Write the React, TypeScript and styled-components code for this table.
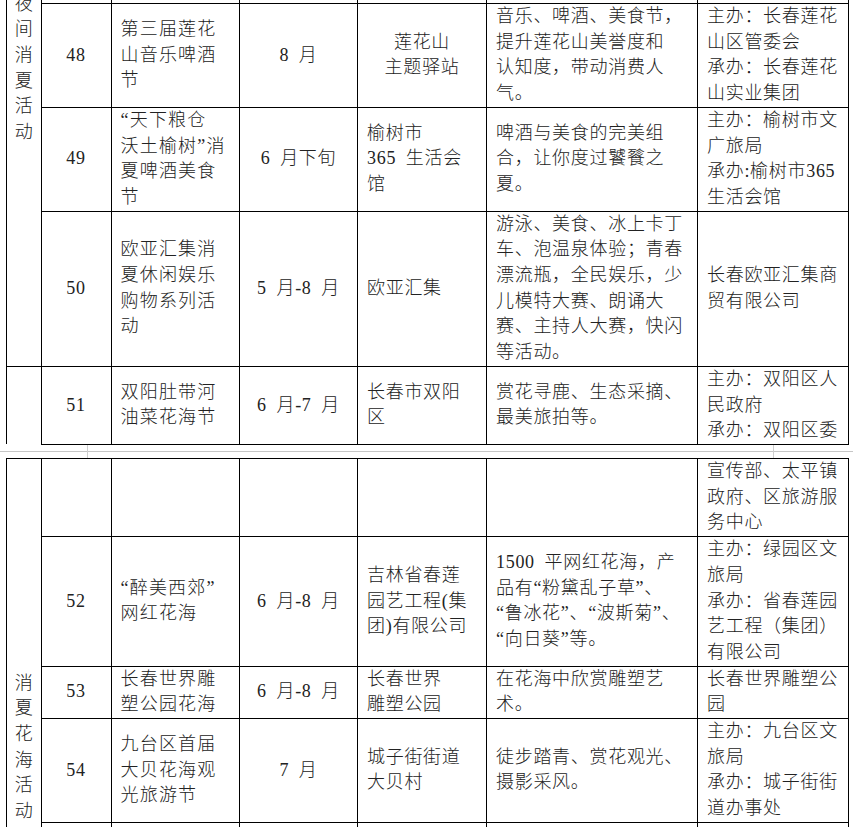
import React from "react";
import styled, { createGlobalStyle } from "styled-components";

const GlobalStyle = createGlobalStyle`
  html, body { margin: 0; padding: 0; background: #ffffff; }
  body {
    font-family: "Liberation Serif", "Noto Sans CJK SC", serif;
    color: #222222;
  }
`;

const Screen = styled.div`
  width: 853px;
  height: 827px;
  overflow: hidden;
  background: #ffffff;
`;

const PageClip = styled.div<{ $h: number }>`
  height: ${(p) => p.$h}px;
  overflow: hidden;
`;

const Sheet = styled.table<{ $offset: number }>`
  border-collapse: collapse;
  table-layout: fixed;
  width: 842px;
  margin: ${(p) => p.$offset}px 0 0 6px;
  font-family: "Liberation Serif", "Noto Sans CJK SC", serif;
  font-size: 18px;
  font-weight: 300;
  line-height: 25.7px;
  color: #222222;
`;

const Cell = styled.td<{ $align?: "left" | "center"; $open?: boolean }>`
  border: 1px solid #000;
  padding: 0 9px;
  vertical-align: middle;
  text-align: ${(p) => p.$align ?? "left"};
  overflow: visible;
  ${(p) => (p.$open ? "border-bottom: none;" : "")}
`;

const GroupCell = styled.td<{ $top: number; $open?: boolean }>`
  border: 1px solid #000;
  ${(p) => (p.$open ? "border-bottom: none;" : "")}
  padding: ${(p) => p.$top}px 0 0 0;
  vertical-align: top;
  text-align: center;
`;

const SpacerCell = styled.td<{ $h: number }>`
  border: 1px solid #000;
  height: ${(p) => p.$h}px;
  padding: 0;
`;

const Line = styled.div<{ $ls?: number }>`
  white-space: nowrap;
  letter-spacing: ${(p) => p.$ls ?? 0.7}px;
  word-spacing: 4.5px;
`;

const Separator = styled.div`
  height: 13px;
  display: flex;
  align-items: stretch;
  background: linear-gradient(
    to bottom,
    transparent 0,
    transparent 6px,
    #c6c6c6 6px,
    #c6c6c6 7px,
    transparent 7px
  );
`;

const Tick = styled.div<{ $left: number }>`
  width: 1px;
  margin-left: ${(p) => p.$left}px;
  background: #cfcfcf;
`;

type RowData = {
  no: string;
  name: string[];
  time: string;
  place: string[];
  placeCenter?: boolean;
  content: string[];
  org: string[];
};

const COLS = [34.5, 70, 128.5, 118, 129, 211, 151];

const Cols = () => (
  <colgroup>
    {COLS.map((w, i) => (
      <col key={i} style={{ width: w }} />
    ))}
  </colgroup>
);

const Lines = ({ lines, ls }: { lines: string[]; ls?: number }) => (
  <>
    {lines.map((l, i) => (
      <Line key={i} $ls={ls}>
        {l}
      </Line>
    ))}
  </>
);

const DataCells = ({ r }: { r: RowData }) => (
  <>
    <Cell $align="center">
      <Line>{r.no}</Line>
    </Cell>
    <Cell>
      <Lines lines={r.name} ls={1.2} />
    </Cell>
    <Cell $align="center">
      <Line>{r.time}</Line>
    </Cell>
    <Cell $align={r.placeCenter ? "center" : "left"}>
      <Lines lines={r.place} />
    </Cell>
    <Cell>
      <Lines lines={r.content} />
    </Cell>
    <Cell>
      <Lines lines={r.org} />
    </Cell>
  </>
);

const page1Rows: RowData[] = [
  {
    no: "48",
    name: ["第三届莲花", "山音乐啤酒", "节"],
    time: "8 月",
    place: ["莲花山", "主题驿站"],
    placeCenter: true,
    content: ["音乐、啤酒、美食节，", "提升莲花山美誉度和", "认知度，带动消费人", "气。"],
    org: ["主办：长春莲花", "山区管委会", "承办：长春莲花", "山实业集团"],
  },
  {
    no: "49",
    name: ["“天下粮仓", "沃土榆树”消", "夏啤酒美食", "节"],
    time: "6 月下旬",
    place: ["榆树市", "365 生活会", "馆"],
    content: ["啤酒与美食的完美组", "合，让你度过饕餮之", "夏。"],
    org: ["主办：榆树市文", "广旅局", "承办:榆树市365", "生活会馆"],
  },
  {
    no: "50",
    name: ["欧亚汇集消", "夏休闲娱乐", "购物系列活", "动"],
    time: "5 月-8 月",
    place: ["欧亚汇集"],
    content: [
      "游泳、美食、冰上卡丁",
      "车、泡温泉体验；青春",
      "漂流瓶，全民娱乐，少",
      "儿模特大赛、朗诵大",
      "赛、主持人大赛，快闪",
      "等活动。",
    ],
    org: ["长春欧亚汇集商", "贸有限公司"],
  },
];

const row51: RowData = {
  no: "51",
  name: ["双阳肚带河", "油菜花海节"],
  time: "6 月-7 月",
  place: ["长春市双阳", "区"],
  content: ["赏花寻鹿、生态采摘、", "最美旅拍等。"],
  org: ["主办：双阳区人", "民政府", "承办：双阳区委"],
};

const page2Rows: RowData[] = [
  {
    no: "52",
    name: ["“醉美西郊”", "网红花海"],
    time: "6 月-8 月",
    place: ["吉林省春莲", "园艺工程(集", "团)有限公司"],
    content: ["1500 平网红花海，产", "品有“粉黛乱子草”、", "“鲁冰花”、“波斯菊”、", "“向日葵”等。"],
    org: ["主办：绿园区文", "旅局", "承办：省春莲园", "艺工程（集团）", "有限公司"],
  },
  {
    no: "53",
    name: ["长春世界雕", "塑公园花海"],
    time: "6 月-8 月",
    place: ["长春世界", "雕塑公园"],
    content: ["在花海中欣赏雕塑艺", "术。"],
    org: ["长春世界雕塑公", "园"],
  },
  {
    no: "54",
    name: ["九台区首届", "大贝花海观", "光旅游节"],
    time: "7 月",
    place: ["城子街街道", "大贝村"],
    content: ["徒步踏青、赏花观光、", "摄影采风。"],
    org: ["主办：九台区文", "旅局", "承办：城子街街", "道办事处"],
  },
];

const VerticalLabel = ({ text }: { text: string }) => (
  <>
    {Array.from(text).map((c, i) => (
      <Line key={i} $ls={0}>
        {c}
      </Line>
    ))}
  </>
);

export default function App() {
  return (
    <Screen>
      <GlobalStyle />
      <PageClip $h={445}>
        <Sheet $offset={-37}>
          <Cols />
          <tbody>
            <tr>
              <GroupCell rowSpan={4} $top={27.6}>
                <VerticalLabel text="夜间消夏活动" />
              </GroupCell>
              {[0, 1, 2, 3, 4, 5].map((i) => (
                <SpacerCell key={i} $h={39} />
              ))}
            </tr>
            {page1Rows.map((r) => (
              <tr key={r.no}>
                <DataCells r={r} />
              </tr>
            ))}
            <tr>
              <Cell $open />
              <DataCells r={row51} />
            </tr>
          </tbody>
        </Sheet>
      </PageClip>
      <Separator>
        <Tick $left={87} />
        <Tick $left={685} />
      </Separator>
      <PageClip $h={369}>
        <Sheet $offset={0}>
          <Cols />
          <tbody>
            <tr>
              <GroupCell rowSpan={5} $top={211.6}>
                <VerticalLabel text="消夏花海活动" />
              </GroupCell>
              <Cell />
              <Cell />
              <Cell />
              <Cell />
              <Cell />
              <Cell>
                <Lines lines={["宣传部、太平镇", "政府、区旅游服", "务中心"]} />
              </Cell>
            </tr>
            {page2Rows.map((r) => (
              <tr key={r.no}>
                <DataCells r={r} />
              </tr>
            ))}
            <tr>
              {[0, 1, 2, 3, 4, 5].map((i) => (
                <SpacerCell key={i} $h={50} />
              ))}
            </tr>
          </tbody>
        </Sheet>
      </PageClip>
    </Screen>
  );
}
